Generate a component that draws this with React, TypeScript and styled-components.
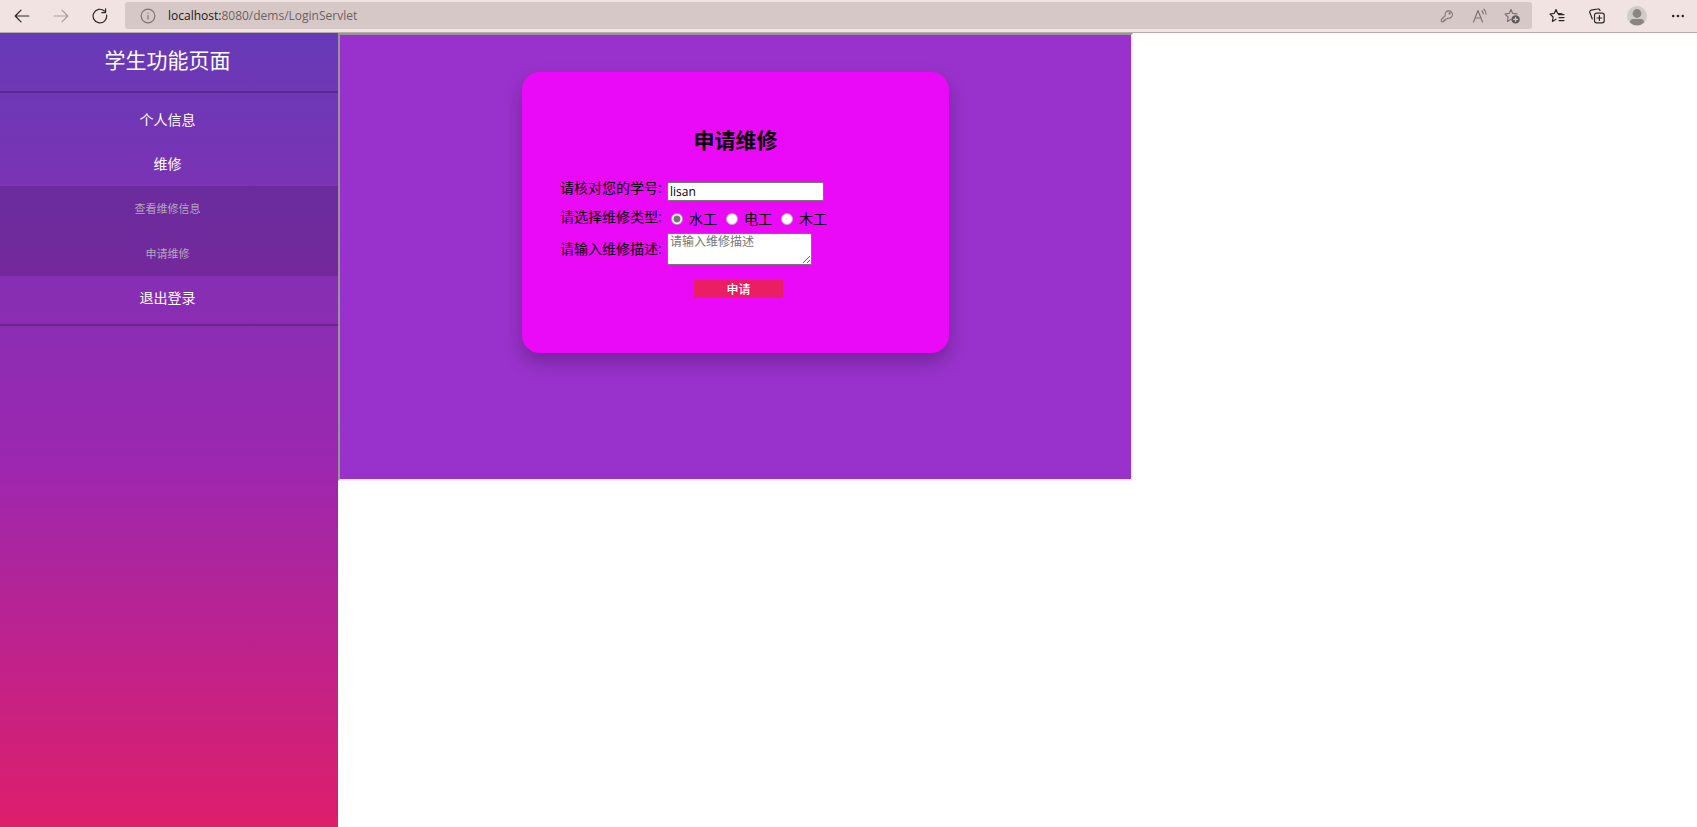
import React from "react";
import styled, { createGlobalStyle } from "styled-components";

const GlobalStyle = createGlobalStyle`
  * { box-sizing: border-box; }
  body {
    margin: 0;
    background: #fff;
    font-family: "Noto Sans", "Noto Sans CJK SC", sans-serif;
  }
`;

const Window = styled.div`
  display: flex;
  flex-direction: column;
  min-height: 100vh;
`;

const Toolbar = styled.header`
  display: flex;
  align-items: center;
  height: 33px;
  padding-right: 4px;
  background: #f1e3e2;
  border-bottom: 1px solid #b9abaa;
`;

const ToolButton = styled.button<{ $w: number; $tone?: "disabled" | "muted" }>`
  display: flex;
  align-items: center;
  justify-content: center;
  flex: none;
  width: ${(p) => p.$w}px;
  height: 28px;
  padding: 0;
  border: 0;
  background: none;
  color: ${(p) =>
    p.$tone === "disabled" ? "#a89d9d" : p.$tone === "muted" ? "#7d7575" : "#2c2828"};
`;

const Nav = styled.nav`
  display: flex;
  padding-left: 2px;
  margin-right: 6px;
`;

const AddressBar = styled.div`
  display: flex;
  align-items: center;
  flex: 1;
  height: 27px;
  margin-bottom: 1px;
  padding: 0 4px 0 7px;
  background: #d6c8c7;
  border-radius: 3px;
`;

const Address = styled.div`
  flex: 1;
  padding-left: 5px;
  font-family: "Open Sans", sans-serif;
  font-size: 12px;
  line-height: 16px;
  color: #6b6363;
`;

const Host = styled.span`
  color: #1c1818;
`;

const Content = styled.div`
  display: flex;
  flex: 1;
  align-items: stretch;
`;

const Sidebar = styled.aside`
  flex: none;
  width: 338px;
  padding-right: 3px;
  background: linear-gradient(#673ab7, #9c27b0 54%, #de1e6a);
  color: #fff;
  text-align: center;
`;

const SidebarRule = styled.div`
  margin-right: -3px;
  border-bottom: 2px solid rgba(0, 0, 0, 0.2);
`;

const SidebarTitle = styled.h1`
  margin: 0;
  padding: 11px 0 15px;
  font-size: 21px;
  line-height: 32px;
  font-weight: 400;
`;

const Menu = styled.ul`
  margin: 0;
  padding: 5px 0 4px;
  list-style: none;
`;

const SubMenu = styled.ul`
  margin: 0 -3px 0 0;
  padding: 0 3px 0 0;
  list-style: none;
  background: rgba(0, 0, 0, 0.13);
`;

const MenuLink = styled.a<{ $sub?: boolean }>`
  display: block;
  font-size: ${(p) => (p.$sub ? 11 : 14)}px;
  line-height: ${(p) => (p.$sub ? 45 : 44)}px;
  color: ${(p) => (p.$sub ? "#b5a5bd" : "#fff")};
  text-decoration: none;
`;

const Frame = styled.main`
  flex: 0 1 795px;
  align-self: flex-start;
  height: 448px;
  padding-top: 37px;
  border: 2px solid;
  border-color: #969696 #f0f0f0 #f0f0f0 #969696;
  background: #9932cc;
`;

const Card = styled.form`
  width: 54%;
  min-width: 400px;
  margin: 0 auto;
  padding: 49px 38px 55px;
  border-radius: 18px;
  background: #eb0af7;
  box-shadow: 0 9px 18px rgba(0, 0, 0, 0.25);
  color: #000;
`;

const CardTitle = styled.h2`
  margin: 0 0 23px;
  font-size: 21px;
  line-height: 38px;
  text-align: center;
`;

const Field = styled.div<{ $align?: "start" }>`
  display: grid;
  grid-template-columns: 103px 1fr;
  column-gap: 4px;
  align-items: ${(p) => p.$align ?? "center"};
  font-size: 14px;
  line-height: 20px;
`;

const FieldLabel = styled.label<{ $raised?: boolean }>`
  line-height: ${(p) => (p.$raised ? 12 : 20)}px;
`;

const RadioGroup = styled.div`
  display: flex;
  align-items: center;
  gap: 9px;
  height: 32px;
  padding: 4px 0 0 4px;
`;

const RadioLabel = styled.label`
  display: flex;
  align-items: center;
  gap: 6px;
`;

const Radio = styled.input`
  appearance: none;
  width: 12px;
  height: 12px;
  margin: 0;
  border: 1px solid #b9a9b9;
  border-radius: 50%;
  background: #fff;
  &:checked {
    border-color: #a8a0a8;
    background: radial-gradient(circle, #767676 0 3px, #fff 4px);
  }
`;

const TextInput = styled.input`
  width: 157px;
  height: 19px;
  padding: 0 2px;
  border: 1px solid #767676;
  border-radius: 2px;
  font: 12px "Open Sans", sans-serif;
  color: #000;
`;

const TextArea = styled.textarea`
  display: block;
  width: 145px;
  height: 32px;
  padding: 1px 2px;
  border: 1px solid #767676;
  border-radius: 2px;
  font: 12px/12px "Noto Sans CJK SC", monospace;
  &::placeholder { color: #757575; }
`;

const Submit = styled.button`
  display: block;
  width: 89px;
  height: 18px;
  margin: 15px 0 0 134px;
  padding: 0;
  border: 0;
  background: #e91e63;
  color: #fff;
  font: 500 12px/20px "Noto Sans", "Noto Sans CJK SC", sans-serif;
`;

const Svg = ({ size = 16, children }: { size?: number; children: React.ReactNode }) => (
  <svg width={size} height={size} viewBox="0 0 16 16" fill="none" stroke="currentColor"
    strokeWidth="1.2" strokeLinecap="round" strokeLinejoin="round" aria-hidden="true">
    {children}
  </svg>
);

const star = "M7 1.5 8.7 5.4 13 5.8M7 1.5 5.2 5.4 1 6l3.1 3L3.4 13.4 7 11.2";

export default function App() {
  return (
    <Window>
      <GlobalStyle />
      <Toolbar>
        <Nav>
          <ToolButton $w={39} aria-label="Back">
            <Svg><path d="M14.8 8H1.5M7 2.2 1.2 8 7 13.8" /></Svg>
          </ToolButton>
          <ToolButton $w={39} $tone="disabled" aria-label="Forward">
            <Svg><path d="M1.2 8h13.3M9 2.2 14.8 8 9 13.8" /></Svg>
          </ToolButton>
          <ToolButton $w={39} aria-label="Refresh">
            <Svg><path d="M14.6 7A6.8 6.8 0 1 1 12.4 3M13.6.8v3.8H9.8" /></Svg>
          </ToolButton>
        </Nav>
        <AddressBar>
          <ToolButton $w={31} $tone="muted" aria-label="Site information">
            <Svg><circle cx="8" cy="8" r="6.8" /><path d="M8 7.4v3.6M8 5v.1" /></Svg>
          </ToolButton>
          <Address><Host>localhost:</Host>8080/dems/LoginServlet</Address>
          <ToolButton $w={32} $tone="muted" aria-label="Saved password">
            <Svg size={14}><path d="M6 7.6a4.2 4.2 0 1 1 3 2.8L7.8 11.5H6V13H4.5v1.5H1.5V12Z" /><circle cx="11" cy="5" r=".7" /></Svg>
          </ToolButton>
          <ToolButton $w={33} $tone="muted" aria-label="Read aloud">
            <Svg><path d="M1.5 14 6 2.5 10.5 14M3 10h6M10 2.8a4 4 0 0 1 1.2 3M12 1.2a7 7 0 0 1 2 5" /></Svg>
          </ToolButton>
          <ToolButton $w={32} $tone="muted" aria-label="Add to favourites">
            <Svg><path d={star} /><circle cx="11.6" cy="11.4" r="4.2" fill="#5f5858" stroke="none" /><path d="M11.6 9.4v4M9.6 11.4h4" stroke="#d6c8c7" /></Svg>
          </ToolButton>
        </AddressBar>
        <ToolButton $w={50} aria-label="Favourites">
          <Svg><path d={star} /><path d="M9.5 6.6h5.5M10 9.6h5M10 12.6h5" /></Svg>
        </ToolButton>
        <ToolButton $w={29} aria-label="Collections">
          <Svg><rect x="5.5" y="5.2" width="9.7" height="9.6" rx="2" /><path d="M10.4 7.6v4.8M8 10h4.8M3.3 11 .9 4.8A2 2 0 0 1 2 2.2L8.6 1a2 2 0 0 1 2.4 1.6" /></Svg>
        </ToolButton>
        <ToolButton $w={52} aria-label="Profile">
          <svg width="20" height="20" viewBox="0 0 20 20" aria-hidden="true">
            <circle cx="10" cy="10" r="10" fill="#d0cbc7" />
            <circle cx="10" cy="7.5" r="4.4" fill="#8b8580" />
            <path d="M3 16.5Q3 13 6 13h8q3 0 3 3.5A10 10 0 0 1 3 16.5Z" fill="#8b8580" />
          </svg>
        </ToolButton>
        <ToolButton $w={30} aria-label="Settings and more">
          <Svg><g fill="currentColor" stroke="none"><circle cx="3.2" cy="8" r="1.3" /><circle cx="8" cy="8" r="1.3" /><circle cx="12.8" cy="8" r="1.3" /></g></Svg>
        </ToolButton>
      </Toolbar>
      <Content>
        <Sidebar>
          <SidebarTitle>学生功能页面</SidebarTitle>
          <SidebarRule />
          <Menu>
            <li><MenuLink href="#info">个人信息</MenuLink></li>
            <li>
              <MenuLink href="#repair">维修</MenuLink>
              <SubMenu>
                <li><MenuLink $sub href="#list">查看维修信息</MenuLink></li>
                <li><MenuLink $sub href="#apply">申请维修</MenuLink></li>
              </SubMenu>
            </li>
            <li><MenuLink href="#logout">退出登录</MenuLink></li>
          </Menu>
          <SidebarRule />
        </Sidebar>
        <Frame>
          <Card onSubmit={(e) => e.preventDefault()}>
            <CardTitle>申请维修</CardTitle>
            <Field $align="start">
              <FieldLabel $raised htmlFor="student">请核对您的学号:</FieldLabel>
              <TextInput id="student" defaultValue="lisan" />
            </Field>
            <Field role="radiogroup" aria-labelledby="kind">
              <span id="kind">请选择维修类型:</span>
              <RadioGroup>
                {["水工", "电工", "木工"].map((name, i) => (
                  <RadioLabel key={name}>
                    <Radio type="radio" name="kind" defaultChecked={i === 0} />
                    {name}
                  </RadioLabel>
                ))}
              </RadioGroup>
            </Field>
            <Field>
              <FieldLabel htmlFor="description">请输入维修描述:</FieldLabel>
              <TextArea id="description" placeholder="请输入维修描述" />
            </Field>
            <Submit type="submit">申请</Submit>
          </Card>
        </Frame>
      </Content>
    </Window>
  );
}
